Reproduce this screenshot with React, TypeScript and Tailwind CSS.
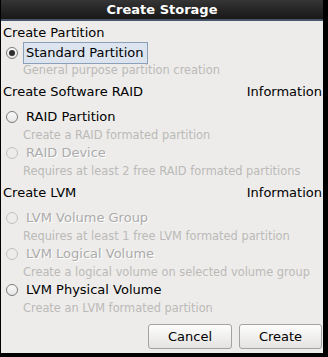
const font = { fontFamily: '"DejaVu Sans", "Liberation Sans", sans-serif' };

type RadioProps = {
	label: string;
	checked?: boolean;
	disabled?: boolean;
	focused?: boolean;
};

const Radio = ({ label, checked, disabled, focused }: RadioProps) => {
	return (
		<div className="flex items-center h-[18px]">
			<div
				className={
					disabled
						? "ml-[3px] w-[12px] h-[12px] rounded-full border border-[#c2c1bf]"
						: "ml-[3px] w-[12px] h-[12px] rounded-full border border-[#7c7b79] bg-gradient-to-b from-[#fafafa] to-[#e6e6e6] flex items-center justify-center"
				}
			>
				{checked && <div className="w-[6px] h-[6px] rounded-full bg-[#2e2e2e]" />}
			</div>
			{focused ? (
				<div className="ml-[5px] h-[22px] flex items-center pl-[2px] pr-[4px] border border-[#8c9fb8] bg-[#dbe4ef] text-[13px] text-black">
					{label}
				</div>
			) : (
				<div
					className={
						disabled
							? "ml-[8px] text-[13px] text-[#ababab] [text-shadow:1px_1px_0_#ffffff]"
							: "ml-[8px] text-[13px] text-black"
					}
				>
					{label}
				</div>
			)}
		</div>
	);
};

const Desc = ({ text }: { text: string }) => (
	<div className="pl-[20px] h-[18px] leading-[18px] text-[11.4px] text-[#bbbab8] whitespace-nowrap">{text}</div>
);

const Header = ({ text, info }: { text: string; info?: boolean }) => (
	<div className="flex justify-between h-[18px] leading-[18px] text-[13px] text-black whitespace-nowrap overflow-hidden">
		<span>{text}</span>
		{info && <span>Information</span>}
	</div>
);

export default function App() {
	return (
		<div style={font} className="w-[328px] h-[357px] bg-black flex flex-col pl-[1px] pr-[5px] pb-[4px]">
			<div className="h-[21px] shrink-0 flex items-center justify-center bg-gradient-to-b from-[#353535] to-[#181818] border-b-2 border-[#46566a] text-white font-bold text-[13px]">
				Create Storage
			</div>
			<div className="flex-1 bg-[#edecea] pl-[2px] pr-[1px] pt-[3px] flex flex-col">
				<Header text="Create Partition" />
				<div className="h-[21px] flex items-center">
					<Radio label="Standard Partition" checked focused />
				</div>
				<div className="h-[16px] flex items-center">
					<div className="pl-[20px] text-[11.4px] text-[#bbbab8] whitespace-nowrap">General purpose partition creation</div>
				</div>

				<div className="mt-[4px]">
					<Header text="Create Software RAID" info />
				</div>
				<div className="mt-[7px]">
					<Radio label="RAID Partition" />
				</div>
				<Desc text="Create a RAID formated partition" />
				<Radio label="RAID Device" disabled />
				<Desc text="Requires at least 2 free RAID formated partitions" />

				<div className="mt-[4px]">
					<Header text="Create LVM" info />
				</div>
				<div className="mt-[7px]">
					<Radio label="LVM Volume Group" disabled />
				</div>
				<Desc text="Requires at least 1 free LVM formated partition" />
				<Radio label="LVM Logical Volume" disabled />
				<Desc text="Create a logical volume on selected volume group" />
				<Radio label="LVM Physical Volume" />
				<Desc text="Create an LVM formated partition" />

				<div className="mt-[7px] flex justify-end gap-[7px]">
					<button className="w-[84px] h-[25px] rounded-[3px] border border-[#a3a2a0] bg-gradient-to-b from-[#fdfdfd] to-[#e4e3e1] text-[13px] text-black">
						Cancel
					</button>
					<button className="w-[83px] h-[25px] rounded-[3px] border border-[#a3a2a0] bg-gradient-to-b from-[#fdfdfd] to-[#e4e3e1] text-[13px] text-black">
						Create
					</button>
				</div>
			</div>
		</div>
	);
}
